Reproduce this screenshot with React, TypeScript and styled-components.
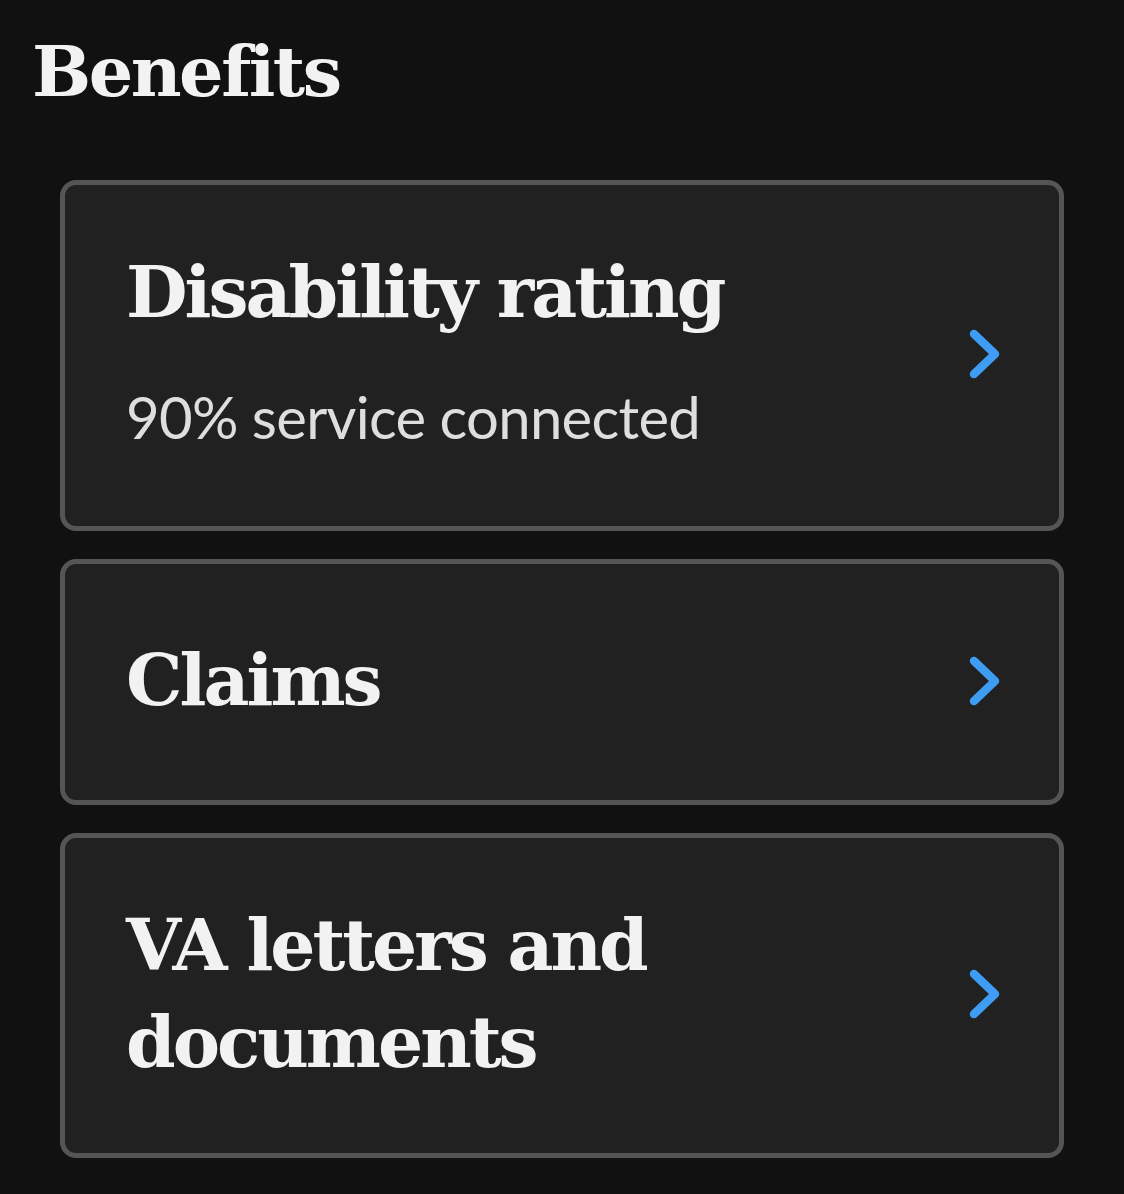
import styled, { createGlobalStyle } from "styled-components";

const GlobalStyle = createGlobalStyle`
  html, body {
    margin: 0;
    padding: 0;
    background-color: #111111;
  }
`;

const Page = styled.div`
  display: flex;
  flex-direction: column;
  padding: 30px 60px 38px 32px;
  min-height: 1194px;
  box-sizing: border-box;
  background-color: #111111;
`;

const Heading = styled.h2`
  margin: 0 0 66px 0;
  font-family: "DejaVu Serif", serif;
  font-weight: 700;
  font-size: 70px;
  line-height: 1.2;
  letter-spacing: -2.5px;
  color: #f2f2f2;
`;

const List = styled.div`
  display: flex;
  flex-direction: column;
  gap: 28px;
  margin-left: 28px;
`;

const Card = styled.a`
  display: flex;
  align-items: center;
  justify-content: space-between;
  gap: 24px;
  min-height: 246px;
  box-sizing: border-box;
  padding: 59px 57px 62px 61px;
  background-color: #212121;
  border: 5px solid #555555;
  border-radius: 16px;
  text-decoration: none;
  cursor: pointer;
`;

const Body = styled.div`
  display: flex;
  flex-direction: column;
`;

const Title = styled.div`
  font-family: "DejaVu Serif", serif;
  font-weight: 700;
  font-size: 71px;
  line-height: 97px;
  letter-spacing: -3px;
  color: #f2f2f2;
`;

const Subtitle = styled.div`
  margin: 35px 0 7px 0;
  font-family: Lato, "Open Sans", sans-serif;
  font-size: 58px;
  line-height: 81px;
  letter-spacing: -0.7px;
  color: #dedede;
`;

const Chevron = styled.svg`
  flex-shrink: 0;
  width: 36px;
  height: 52px;
`;

function Arrow() {
  return (
    <Chevron viewBox="0 0 36 52" fill="none">
      <path
        d="M8 6 L29 26 L8 46"
        stroke="#3f9cf3"
        strokeWidth="8.5"
        strokeLinecap="round"
        strokeLinejoin="round"
      />
    </Chevron>
  );
}

const items = [
  { title: "Disability rating", subtitle: "90% service connected" },
  { title: "Claims" },
  { title: "VA letters and documents" },
];

function App() {
  return (
    <>
      <GlobalStyle />
      <Page>
        <Heading>Benefits</Heading>
        <List>
          {items.map((item) => (
            <Card key={item.title}>
              <Body>
                <Title>
                  {item.title === "VA letters and documents" ? (
                    <>
                      VA letters and
                      <br />
                      documents
                    </>
                  ) : (
                    item.title
                  )}
                </Title>
                {item.subtitle && <Subtitle>{item.subtitle}</Subtitle>}
              </Body>
              <Arrow />
            </Card>
          ))}
        </List>
      </Page>
    </>
  );
}

export default App;
